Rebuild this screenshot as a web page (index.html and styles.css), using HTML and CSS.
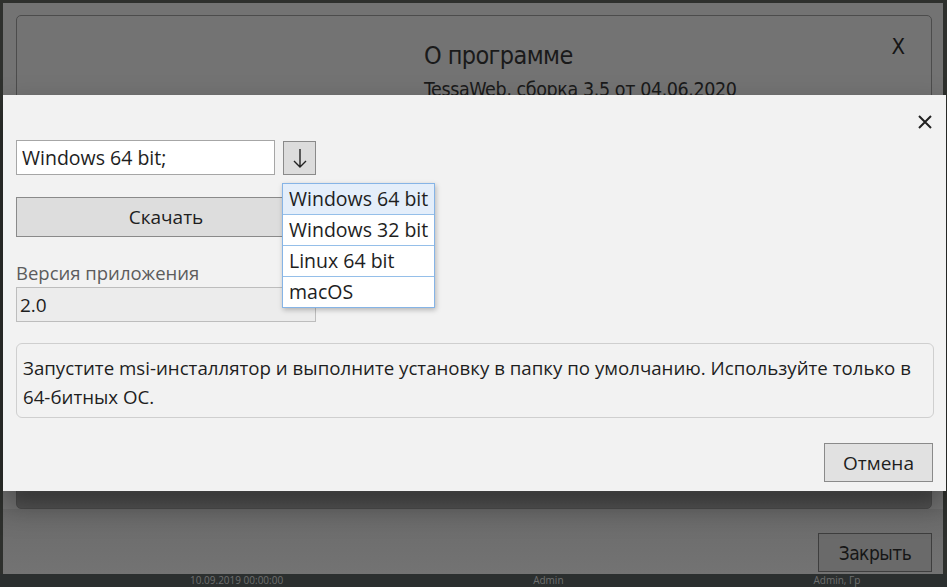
FILE: index.html
```html
<!DOCTYPE html>
<html lang="ru">
<head>
  <meta charset="UTF-8" />
  <title>TessaWeb | Скачать приложение</title>
  <link rel="stylesheet" href="styles.css">
</head>
<body>
  <!-- Background dialog (dimmed) -->
  <div class="about-dialog">
    <div class="about-box">
      <span class="about-close">X</span>
      <div class="about-head">
        <h2>О программе</h2>
        <p>TessaWeb, сборка 3.5 от 04.06.2020</p>
      </div>
    </div>
    <div class="about-footer">
      <button class="about-btn">Закрыть</button>
    </div>
  </div>
  <div class="page-row">
    <span>10.09.2019 00:00:00</span>
    <span>Admin</span>
    <span>Admin, Гр</span>
  </div>

  <!-- Download dialog -->
  <div class="dialog">
    <button class="dialog-close" aria-label="Закрыть">
      <svg width="14" height="14" viewBox="0 0 14 14">
        <path d="M1 1 L13 13 M13 1 L1 13" stroke="#222" stroke-width="2" fill="none"/>
      </svg>
    </button>

    <div class="dialog-body">
      <div class="platform-row">
        <input type="text" class="platform-input" value="Windows 64 bit;" />
        <button class="arrow-btn" aria-label="Выбрать">
          <svg width="16" height="24" viewBox="0 0 16 24">
            <path d="M8 3 V21 M2 15 L8 21 L14 15" stroke="#222" stroke-width="1.4" fill="none"/>
          </svg>
        </button>
        <ul class="platform-list">
          <li class="selected">Windows 64 bit</li>
          <li>Windows 32 bit</li>
          <li>Linux 64 bit</li>
          <li>macOS</li>
        </ul>
      </div>

      <button class="btn download-btn">Скачать</button>

      <label class="field-label" for="version">Версия приложения</label>
      <input type="text" id="version" class="version-input" value="2.0" readonly />

      <div class="info-box">
        Запустите msi-инсталлятор и выполните установку в папку по умолчанию. Используйте только в 64-битных ОС.
      </div>
    </div>

    <div class="dialog-footer">
      <button class="btn cancel-btn">Отмена</button>
    </div>
  </div>
</body>
</html>
```

FILE: styles.css
```css
* {
  box-sizing: border-box;
}

body {
  margin: 0;
  padding: 0;
  width: 947px;
  height: 587px;
  overflow: hidden;
  font-family: "Open Sans", "Noto Sans", sans-serif;
  background: #2e302d;
  position: relative;
}

/* ---- dimmed background dialog ---- */

.about-dialog {
  position: absolute;
  left: 3px;
  top: 3px;
  width: 940px;
  height: 571px;
  background: #737373;
  padding: 12px 11px 0 13px;
  display: flex;
  flex-direction: column;
}

.about-box {
  position: relative;
  height: 494px;
  border: 1px solid #4c4c4c;
  border-radius: 5px;
  background: linear-gradient(to bottom, #737373 0, #737373 460px, #4f4f4f 478px, #555 494px);
}

.about-close {
  position: absolute;
  right: 26px;
  top: 18px;
  font-family: "DejaVu Sans Condensed", "Liberation Sans", sans-serif;
  font-size: 22px;
  color: #151515;
}

.about-head {
  padding: 24px 0 0 407px;
  color: #1a1a1a;
  font-family: "DejaVu Sans Condensed", "Liberation Sans", sans-serif;
}

.about-head h2 {
  margin: 0;
  font-size: 25px;
  line-height: 32px;
  font-weight: normal;
  letter-spacing: -0.6px;
}

.about-head p {
  margin: 6px 0 0;
  font-size: 19.5px;
  line-height: 24px;
  letter-spacing: -0.4px;
}

.about-footer {
  display: flex;
  justify-content: flex-end;
  padding-top: 24px;
  background: linear-gradient(to bottom, #6b6b6b, #737373);
  margin: 0 -11px 0 -13px;
  padding-right: 11px;
  flex: 1;
}

.about-btn {
  width: 114px;
  height: 39px;
  background: #6a6a6a;
  border: 1px solid #3e3e3e;
  color: #161616;
  font-family: "DejaVu Sans Condensed", "Liberation Sans", sans-serif;
  font-size: 19px;
  letter-spacing: -0.5px;
}

.page-row {
  position: absolute;
  left: 0;
  top: 574px;
  width: 947px;
  height: 13px;
  background: #2b2f2f;
  color: #6f6f6f;
  font-size: 10px;
  line-height: 13px;
  white-space: nowrap;
  display: flex;
  gap: 250px;
  padding-left: 190px;
}

/* ---- download dialog ---- */

.dialog {
  position: absolute;
  left: 3px;
  top: 95px;
  width: 943px;
  height: 396px;
  background: #f2f2f2;
  box-shadow: 0 14px 28px rgba(0, 0, 0, 0.35);
  color: #1e1e1e;
  font-size: 19px;
}

.dialog-close {
  position: absolute;
  right: 14px;
  top: 20px;
  width: 14px;
  height: 14px;
  padding: 0;
  border: none;
  background: none;
  display: flex;
}

.dialog-body {
  padding: 45px 12px 0 13px;
}

.platform-row {
  position: relative;
  display: flex;
  align-items: flex-start;
  gap: 8px;
}

.platform-input {
  width: 259px;
  height: 35px;
  border: 1px solid #a6a6a6;
  background: #fff;
  padding: 0 5px;
  font-family: inherit;
  font-size: 19.5px;
  color: #1e1e1e;
}

.arrow-btn {
  width: 33px;
  height: 34px;
  margin-top: 1px;
  border: 1px solid #8a8a8a;
  background: #dcdcdc;
  padding: 0;
  display: flex;
  align-items: center;
  justify-content: center;
}

.platform-list {
  position: absolute;
  left: 266px;
  top: 43px;
  width: 153px;
  margin: 0;
  padding: 0;
  list-style: none;
  background: #fff;
  border: 1px solid #86b4e6;
  box-shadow: 1px 2px 5px rgba(0, 0, 0, 0.25);
  z-index: 2;
  font-size: 19.5px;
}

.platform-list li {
  height: 31px;
  line-height: 30px;
  padding-left: 6px;
  border-top: 1px solid #95bfe9;
  white-space: nowrap;
  overflow: hidden;
}

.platform-list li:first-child {
  border-top: none;
  height: 30px;
}

.platform-list li.selected {
  background: #e4eefa;
}

.btn {
  font-family: inherit;
  font-size: 19px;
  color: #1e1e1e;
  background: #dddddd;
  border: 1px solid #8a8a8a;
  cursor: pointer;
}

.download-btn {
  display: block;
  width: 300px;
  height: 40px;
  margin-top: 22px;
}

.field-label {
  display: block;
  margin-top: 22px;
  color: #5c5c5c;
  line-height: 27px;
  font-size: 18.5px;
}

.version-input {
  display: block;
  width: 300px;
  height: 35px;
  margin-top: 1px;
  border: 1px solid #bdbdbd;
  background: #ececec;
  padding: 0 3px;
  font-family: inherit;
  font-size: 19px;
  color: #1e1e1e;
}

.info-box {
  margin-top: 21px;
  border: 1px solid #cfcfcf;
  border-radius: 6px;
  padding: 9px 6px 7px;
  line-height: 29px;
  height: 75px;
  font-size: 18.7px;
}

.dialog-footer {
  display: flex;
  justify-content: flex-end;
  padding: 25px 13px 0;
}

.cancel-btn {
  width: 109px;
  height: 39px;
  background: #e1e1e1;
}
```
